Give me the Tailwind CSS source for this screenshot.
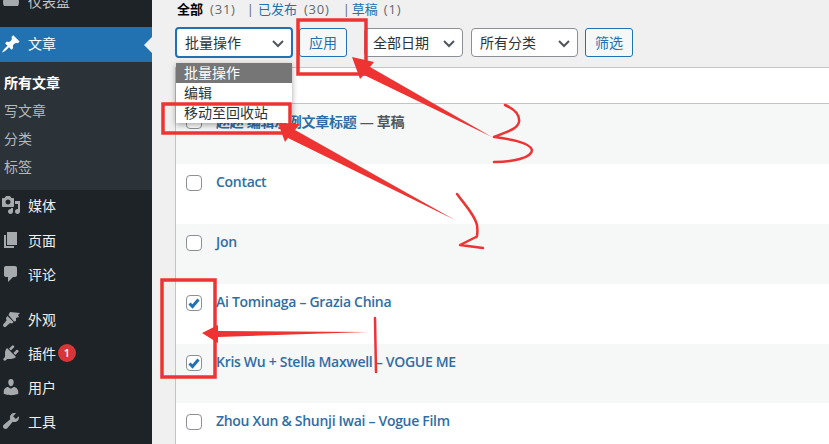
<!DOCTYPE html>
<html lang="zh-CN">
<head>
  <meta charset="UTF-8" />
  <title>文章</title>
  <script src="https://cdn.jsdelivr.net/npm/@tailwindcss/browser@4"></script>
</head>
<body class="bg-[#f0f0f1] font-['Open_Sans','Noto_Sans_CJK_SC',sans-serif] text-[13px] text-[#3c434a]">
  <div class="relative flex h-[444px] w-[829px] overflow-hidden">

    <!-- Sidebar -->
    <aside class="w-[152px] shrink-0 bg-[#1d2327] text-[14px] text-[#f0f0f1]">
      <div class="-mt-[16px] mb-[9px] flex h-[34px] items-center gap-[7px] pl-[1px] text-[#c3c4c7]">
        <svg class="h-5 w-5 fill-[#a7aaad]" viewBox="0 0 20 20"><path d="M3 15a8 8 0 1 1 14 0z"/></svg>
        <span>仪表盘</span>
      </div>
      <div class="relative flex h-[35px] items-center gap-[7px] bg-[#2271b1] pb-[2px] pl-[1px] text-white">
        <svg class="h-5 w-5 fill-white" viewBox="0 0 20 20"><path d="M10.440 3.020l1.820-1.820 6.360 6.350-1.830 1.820c-1.050-.68-2.480-.57-3.410.36l-.75.75c-.92.93-1.040 2.350-.35 3.410l-1.830 1.820-2.410-2.410-2.800 2.790c-.42.42-3.380 2.710-3.800 2.290s1.860-3.390 2.280-3.810l2.790-2.790L4.100 9.360l1.830-1.820c1.050.69 2.480.57 3.400-.36l.75-.75c.93-.92 1.050-2.350.36-3.410z"/></svg>
        <span>文章</span>
        <span class="absolute right-0 top-1/2 -translate-y-1/2 border-y-[8px] border-r-[8px] border-y-transparent border-r-[#f0f0f1]"></span>
      </div>
      <ul class="flex h-[128px] flex-col bg-[#2c3338] pl-[4px] pt-[6px] text-[#b4b9be]">
        <li class="flex h-[28px] items-center font-semibold text-white">所有文章</li>
        <li class="flex h-[28px] items-center">写文章</li>
        <li class="flex h-[28px] items-center">分类</li>
        <li class="flex h-[28px] items-center">标签</li>
      </ul>
      <nav>
        <a class="mt-[-2px] flex h-[34px] items-center gap-[7px] pl-[1px]">
          <svg class="h-5 w-5 fill-[#a7aaad]" viewBox="0 0 20 20"><path d="M13 11V4c0-.55-.45-1-1-1h-1.670L9 1H5L3.670 3H2c-.55 0-1 .45-1 1v7c0 .55.45 1 1 1h10c.55 0 1-.45 1-1zM7 4.500c1.380 0 2.500 1.120 2.500 2.500S8.380 9.500 7 9.500 4.500 8.380 4.500 7 5.620 4.500 7 4.500zM14 6h5v10.500c0 1.380-1.120 2.500-2.500 2.500S14 17.880 14 16.500s1.120-2.500 2.500-2.500c.17 0 .34.020.5.050V9h-3V6zm-4 8.050V13h2v3.500c0 1.380-1.120 2.500-2.500 2.500S7 17.880 7 16.500 8.120 14 9.500 14c.17 0 .34.020.5.050z"/></svg>
          <span>媒体</span>
        </a>
        <a class="mt-[1px] flex h-[34px] items-center gap-[7px] pl-[1px]">
          <svg class="h-5 w-5 fill-[#a7aaad]" viewBox="0 0 20 20"><path d="M6 15V2h10v13H6zm-1 1h8v2H3V5h2v11z"/></svg>
          <span>页面</span>
        </a>
        <a class="flex h-[34px] items-center gap-[7px] pl-[1px]">
          <svg class="h-5 w-5 fill-[#a7aaad]" viewBox="0 0 20 20"><path d="M5 2h9c1.100 0 2 .9 2 2v7c0 1.100-.9 2-2 2h-2l-5 5v-5H5c-1.100 0-2-.9-2-2V4c0-1.100.9-2 2-2z"/></svg>
          <span>评论</span>
        </a>
        <a class="mt-[11px] flex h-[34px] items-center gap-[7px] pl-[1px]">
          <svg class="h-5 w-5 fill-[#a7aaad]" viewBox="0 0 20 20"><path d="M9 3l10 1-2 2 1 2-3 1v3l-2 .5L7.500 6zM6.500 7l6 6-1.500 1.500-2-.5-4.500 4c-.9.7-3-1-2.500-2.200L5.500 11.500 5 9z"/></svg>
          <span>外观</span>
        </a>
        <a class="flex h-[34px] items-center gap-[7px] pl-[1px]">
          <svg class="h-5 w-5 fill-[#a7aaad]" viewBox="0 0 20 20"><path d="M13.110 4.360L9.870 7.600 8 5.730l3.240-3.240c.35-.34 1.050-.2 1.560.32.520.51.660 1.210.31 1.550zm-8 1.770l.91-1.120 9.010 9.010-1.190.84c-.71.710-2.630 1.160-3.820 1.160H6.140L4.900 17.260c-.59.590-1.540.59-2.120 0-.59-.58-.59-1.530 0-2.120l1.240-1.240v-3.880c0-1.130.4-3.190 1.090-3.890zm7.260 3.970l3.240-3.240c.34-.35 1.040-.21 1.550.31.520.51.660 1.210.31 1.560l-3.240 3.240z"/></svg>
          <span>插件</span>
          <span class="-ml-[5px] flex h-[18px] w-[18px] items-center justify-center rounded-full bg-[#d63638] text-[11px] font-semibold text-white">1</span>
        </a>
        <a class="flex h-[34px] items-center gap-[7px] pl-[1px]">
          <svg class="h-5 w-5 fill-[#a7aaad]" viewBox="0 0 20 20"><path d="M10 9.250c-2.270 0-2.730-3.440-2.730-3.440C7 4.020 7.820 2 9.970 2c2.160 0 2.980 2.020 2.710 3.810 0 0-.41 3.440-2.680 3.440zm0 2.570L12.720 10c2.390 0 4.520 2.330 4.520 4.530v2.490s-3.650 1.130-7.240 1.130c-3.650 0-7.240-1.130-7.240-1.130v-2.490c0-2.250 1.940-4.480 4.150-4.480z"/></svg>
          <span>用户</span>
        </a>
        <a class="flex h-[34px] items-center gap-[7px] pl-[1px]">
          <svg class="h-5 w-5 fill-[#a7aaad]" viewBox="0 0 20 20"><path d="M16.680 9.770c-1.340 1.340-3.300 1.670-4.950.99l-5.410 6.520c-.99.990-2.590.99-3.580 0s-.99-2.590 0-3.570l6.520-5.420c-.68-1.650-.35-3.610.99-4.950 1.280-1.280 3.120-1.620 4.720-1.060l-2.890 2.890 2.820 2.820 2.860-2.860c.53 1.580.18 3.420-1.080 4.640z"/></svg>
          <span>工具</span>
        </a>
      </nav>
    </aside>

    <!-- Main -->
    <main class="min-w-0 flex-1 pl-[23px]">
      <div class="flex h-[19px] items-center pl-[2px] text-[13px] text-[#646970]">
        <b class="font-semibold text-black">全部</b>
        <span class="ml-[7px] tracking-[0.8px]">(31)</span>
        <span class="ml-[11px]">|</span>
        <span class="ml-[4px] text-[#2271b1]">已发布</span>
        <span class="ml-[7px] tracking-[0.8px]">(30)</span>
        <span class="ml-[13px]">|</span>
        <span class="ml-[2px] text-[#2271b1]">草稿</span>
        <span class="ml-[6px] tracking-[0.8px]">(1)</span>
      </div>

      <!-- Filters -->
      <div class="mt-[8px] flex h-[31px] items-center text-[14px]">
        <div class="flex h-[31px] w-[118px] items-center justify-between rounded-[4px] border-2 border-[#2271b1] bg-white pl-[8px] pr-[5px] text-[#2c3338]">
          <span>批量操作</span>
          <svg class="h-4 w-4 fill-none stroke-[#50575e] stroke-2" viewBox="0 0 16 16"><path d="M3 6l5 5 5-5"/></svg>
        </div>
        <button class="ml-[6px] h-[29px] w-[48px] rounded-[3px] border border-[#2271b1] bg-[#f6f7f7] text-[#2271b1]">应用</button>
        <div class="ml-[17px] flex h-[29px] w-[99px] items-center justify-between rounded-[4px] border border-[#8c8f94] bg-white pl-[8px] pr-[5px] text-[#2c3338]">
          <span>全部日期</span>
          <svg class="h-4 w-4 fill-none stroke-[#50575e] stroke-2" viewBox="0 0 16 16"><path d="M3 6l5 5 5-5"/></svg>
        </div>
        <div class="ml-[8px] flex h-[29px] w-[107px] items-center justify-between rounded-[4px] border border-[#8c8f94] bg-white pl-[8px] pr-[5px] text-[#2c3338]">
          <span>所有分类</span>
          <svg class="h-4 w-4 fill-none stroke-[#50575e] stroke-2" viewBox="0 0 16 16"><path d="M3 6l5 5 5-5"/></svg>
        </div>
        <button class="ml-[7px] h-[29px] w-[48px] rounded-[3px] border border-[#2271b1] bg-[#f6f7f7] text-[#2271b1]">筛选</button>
      </div>

      <!-- Posts table -->
      <div class="mt-[9px] w-[700px] border-l border-t border-[#c3c4c7] bg-white text-[14px] font-semibold tracking-[-0.3px] text-[#2f6ea5]">
        <div class="h-[36px] border-b border-[#c3c4c7]"></div>
        <div class="flex h-[60px] items-start gap-[14px] bg-[#f6f7f7] pl-[10px] pt-[7px]">
          <span class="mt-[2px] h-[16px] w-[16px] rounded-[4px] border border-[#8c8f94] bg-white"></span>
          <span>赵赵 编辑示例文章标题 <span class="text-[#50575e]">— 草稿</span></span>
        </div>
        <div class="flex h-[60px] items-start gap-[14px] pl-[10px] pt-[7px]">
          <span class="mt-[4px] h-[16px] w-[16px] rounded-[4px] border border-[#8c8f94] bg-white"></span>
          <span>Contact</span>
        </div>
        <div class="flex h-[60px] items-start gap-[14px] bg-[#f6f7f7] pl-[10px] pt-[7px]">
          <span class="mt-[4px] h-[16px] w-[16px] rounded-[4px] border border-[#8c8f94] bg-white"></span>
          <span>Jon</span>
        </div>
        <div class="flex h-[60px] items-start gap-[14px] pl-[10px] pt-[7px]">
          <span class="mt-[4px] flex h-[16px] w-[16px] items-center justify-center rounded-[4px] border border-[#8c8f94] bg-white">
            <svg class="h-[14px] w-[14px] fill-none stroke-[#2271b1] stroke-[3]" viewBox="0 0 14 14"><path d="M2.500 7.500l3 3 6-7"/></svg>
          </span>
          <span>Ai Tominaga – Grazia China</span>
        </div>
        <div class="flex h-[59px] items-start gap-[14px] bg-[#f6f7f7] pl-[10px] pt-[7px]">
          <span class="mt-[4px] flex h-[16px] w-[16px] items-center justify-center rounded-[4px] border border-[#8c8f94] bg-white">
            <svg class="h-[14px] w-[14px] fill-none stroke-[#2271b1] stroke-[3]" viewBox="0 0 14 14"><path d="M2.500 7.500l3 3 6-7"/></svg>
          </span>
          <span>Kris Wu + Stella Maxwell – VOGUE ME</span>
        </div>
        <div class="flex h-[60px] items-start gap-[14px] pl-[10px] pt-[7px]">
          <span class="mt-[4px] h-[16px] w-[16px] rounded-[4px] border border-[#8c8f94] bg-white"></span>
          <span>Zhou Xun &amp; Shunji Iwai – Vogue Film</span>
        </div>
      </div>
    </main>

    <!-- Open select menu -->
    <ul class="absolute left-[176px] top-[63px] w-[116px] bg-white text-[14px] leading-[20px] text-[#2c3338] shadow-[0_2px_6px_rgba(0,0,0,0.35)]">
      <li class="bg-[#767676] pl-[8px] text-white">批量操作</li>
      <li class="pl-[8px]">编辑</li>
      <li class="pl-[8px]">移动至回收站</li>
    </ul>

    <!-- Red annotations -->
    <svg class="pointer-events-none absolute left-0 top-0" width="829" height="444" viewBox="0 0 829 444">
      <g fill="none" stroke="#ee3333" stroke-width="3.500">
        <rect x="298" y="20" width="68" height="54"/>
        <rect x="163" y="104" width="127" height="29"/>
        <rect x="162" y="280" width="53" height="97"/>
      </g>
      <g fill="#ee3333">
        <path d="M352 57L374 62 370 67 492 137 364 75 360 79z"/>
        <path d="M278 123L300 124 295 130 455 220 288 138 285 142z"/>
        <path d="M202 333L218 325 218 331 368 332 218 337 218 343z"/>
      </g>
      <g fill="none" stroke="#ee3333" stroke-width="2.500" stroke-linecap="round" stroke-linejoin="round">
        <path d="M505 105C514 109 520 115 519 122 517 130 505 132 494 137 508 139 530 142 532 150 532 158 512 162 494 162"/>
        <path d="M457 194C465 205 475 215 477 225 478 232 477 238 476 237L460 245 483 248"/>
        <path d="M375 318L376 372"/>
      </g>
    </svg>
  </div>
</body>
</html>
